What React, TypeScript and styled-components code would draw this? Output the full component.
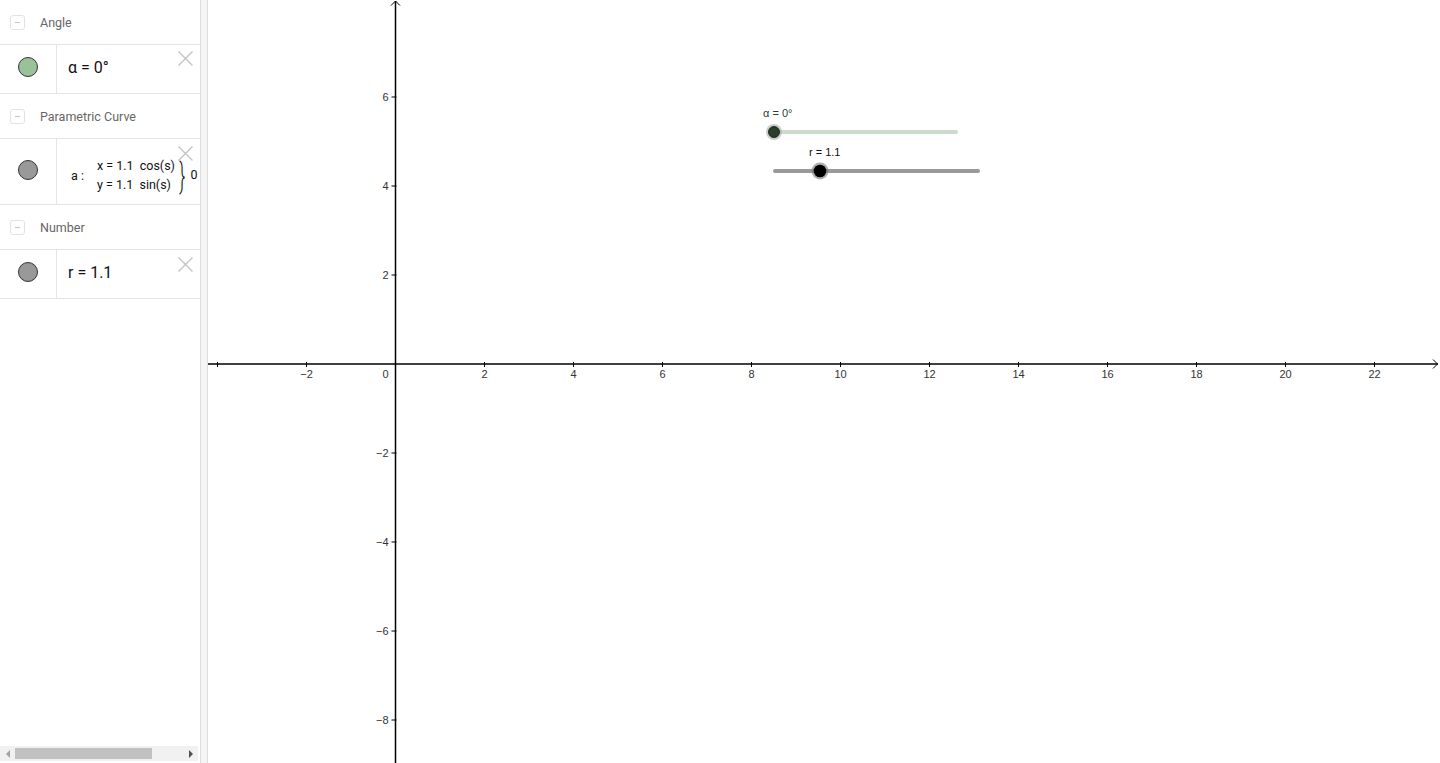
import React from "react";
import styled, { createGlobalStyle } from "styled-components";

const GlobalStyle = createGlobalStyle`
  html, body {
    margin: 0;
    padding: 0;
    height: 100%;
    overflow: hidden;
    background: #fff;
  }
  #root {
    height: 100%;
  }
`;

const Page = styled.div`
  display: flex;
  height: 763px;
  width: 1440px;
  font-family: Roboto, "Noto Sans", sans-serif;
  color: #000;
`;

const AlgebraPanel = styled.aside`
  width: 200px;
  flex: none;
  display: flex;
  flex-direction: column;
  overflow: hidden;
  background: #fff;
`;

const PanelBody = styled.div`
  flex: 1;
  display: flex;
  flex-direction: column;
`;

const GroupHeader = styled.div`
  height: 43px;
  padding-top: 1px;
  flex: none;
  display: flex;
  align-items: center;
  gap: 15px;
  padding-left: 10px;
  border-bottom: 1px solid #e4e4e4;
`;

const CollapseToggle = styled.span`
  width: 13px;
  height: 13px;
  border: 1px solid #e2e2e2;
  border-radius: 3px;
  display: flex;
  align-items: center;
  justify-content: center;

  &::after {
    content: "";
    width: 5px;
    height: 1px;
    background: #c4c4c4;
  }
`;

const GroupTitle = styled.span`
  font-size: 12.5px;
  color: #666;
`;

const ItemRow = styled.div<{ $height: number }>`
  position: relative;
  height: ${({ $height }) => $height - 4}px;
  padding-bottom: 4px;
  flex: none;
  display: flex;
  border-bottom: 1px solid #e4e4e4;
`;

const MarbleCell = styled.div`
  width: 56px;
  margin-bottom: -4px;
  padding-bottom: 4px;
  flex: none;
  display: flex;
  align-items: center;
  justify-content: center;
  border-right: 1px solid #e4e4e4;
`;

const Marble = styled.span<{ $fill: string }>`
  width: 18px;
  height: 18px;
  border-radius: 50%;
  background: ${({ $fill }) => $fill};
  border: 1px solid #333;
`;

const ItemContent = styled.div`
  flex: none;
  display: flex;
  align-items: center;
  padding-left: 11px;
  font-size: 16px;
  white-space: nowrap;
  color: #111;
`;

const CurveLabel = styled.span`
  font-size: 12.5px;
  margin-left: 3px;
  margin-right: 13px;
  margin-top: 11px;
`;

const CurveLines = styled.div`
  display: flex;
  flex-direction: column;
  margin-top: 10px;
  font-size: 12.5px;
  line-height: 19px;
`;

const Brace = styled.span`
  font-size: 20px;
  font-weight: 300;
  margin-left: 4px;
  margin-top: 12px;
  transform: scale(0.9, 1.75);
  color: #111;
`;

const CurveRange = styled.span`
  font-size: 12.5px;
  margin-left: 5px;
  margin-top: 10px;
`;

const DeleteButton = styled.span<{ $top: number }>`
  position: absolute;
  top: ${({ $top }) => $top}px;
  right: 7px;
  width: 15px;
  height: 15px;
  display: block;
`;

const Scrollbar = styled.div`
  height: 15px;
  margin: 0 2px 2px 0;
  background: #f1f1f1;
  display: flex;
  align-items: center;
`;

const ScrollArrow = styled.span<{ $dir: "left" | "right"; $color: string }>`
  width: 15px;
  display: flex;
  justify-content: center;

  &::before {
    content: "";
    border-top: 4px solid transparent;
    border-bottom: 4px solid transparent;
    ${({ $dir, $color }) =>
      $dir === "left"
        ? `border-right: 4px solid ${$color};`
        : `border-left: 4px solid ${$color};`}
  }
`;

const ScrollThumb = styled.span`
  width: 137px;
  height: 11px;
  background: #c1c1c1;
`;

const ScrollTrack = styled.span`
  flex: 1;
`;

const Splitter = styled.div`
  width: 6px;
  flex: none;
  background: #f5f5f5;
  border-left: 1px solid #dcdcdc;
  border-right: 1px solid #dcdcdc;
`;

const GraphicsView = styled.main`
  flex: 1;
  position: relative;
  overflow: hidden;
  background: #fff;

  svg {
    display: block;
  }
`;

const CloseIcon = () => (
  <svg width="15" height="15" viewBox="0 0 15 15">
    <path d="M0.5 0.5 L14.5 14.5 M14.5 0.5 L0.5 14.5" stroke="#c3c3c3" strokeWidth="1.4" fill="none" />
  </svg>
);

const OX = 395.5;
const OY = 364;
const UNIT = 44.5;
const LABEL_FONT = '"Liberation Sans", Arial, sans-serif';

const xTicks = [-4, -2, 2, 4, 6, 8, 10, 12, 14, 16, 18, 20, 22];
const yTicks = [6, 4, 2, -2, -4, -6, -8];

const fmt = (n: number) => (n < 0 ? `\u2212${-n}` : `${n}`);

const Axes = () => (
  <svg width="1232" height="763" viewBox="208 0 1232 763">
    <g stroke="#000" strokeWidth="1.5" fill="none">
      <line x1="208" y1={OY} x2="1438" y2={OY} />
      <line x1={OX} y1="1" x2={OX} y2="763" />
      <polyline points="1433,359.5 1437.5,364 1433,368.5" strokeWidth="1" />
      <polyline points="391,5.5 395.5,1 400,5.5" strokeWidth="1" />
    </g>
    <g stroke="#000" strokeWidth="1">
      {xTicks.map((t) => (
        <line key={t} x1={OX + t * UNIT} y1={OY - 2} x2={OX + t * UNIT} y2={OY + 3} />
      ))}
      {yTicks.map((t) => (
        <line key={t} x1={OX - 4} y1={OY - t * UNIT} x2={OX + 1} y2={OY - t * UNIT} />
      ))}
    </g>
    <g fontFamily={LABEL_FONT} fontSize="11" fill="#333">
      {xTicks
        .filter((t) => t !== -4)
        .map((t) => (
          <text key={t} x={OX + t * UNIT} y={OY + 14} textAnchor="middle">
            {fmt(t)}
          </text>
        ))}
      <text x={OX - 7} y={OY + 14} textAnchor="end">
        0
      </text>
      {yTicks.map((t) => (
        <text key={t} x={OX - 7} y={OY - t * UNIT + 4} textAnchor="end">
          {fmt(t)}
        </text>
      ))}
    </g>

    {/* slider α */}
    <line x1="774" y1="132" x2="956" y2="132" stroke="#cadcca" strokeWidth="4" strokeLinecap="round" />
    <circle cx="774" cy="132" r="8" fill="#9aa89a" opacity="0.55" />
    <circle cx="774" cy="132" r="5.5" fill="#2b3d2b" stroke="#111" strokeWidth="0.8" />
    <text x="763" y="117" fontFamily={LABEL_FONT} fontSize="11" fill="#2c3f2c">
      α = 0°
    </text>

    {/* slider r */}
    <line x1="775" y1="171" x2="978" y2="171" stroke="#999" strokeWidth="4" strokeLinecap="round" />
    <circle cx="820" cy="171" r="8.5" fill="#777" opacity="0.6" />
    <circle cx="820" cy="171" r="6.3" fill="#000" />
    <text x="809" y="156" fontFamily={LABEL_FONT} fontSize="11" fill="#111">
      r = 1.1
    </text>
  </svg>
);

const Group = ({ title }: { title: string }) => (
  <GroupHeader>
    <CollapseToggle />
    <GroupTitle>{title}</GroupTitle>
  </GroupHeader>
);

export default function App() {
  return (
    <>
      <GlobalStyle />
      <Page>
        <AlgebraPanel>
          <PanelBody>
            <Group title="Angle" />
            <ItemRow $height={48}>
              <MarbleCell>
                <Marble $fill="#99c299" />
              </MarbleCell>
              <ItemContent>α = 0°</ItemContent>
              <DeleteButton $top={6}>
                <CloseIcon />
              </DeleteButton>
            </ItemRow>

            <Group title="Parametric Curve" />
            <ItemRow $height={65}>
              <MarbleCell>
                <Marble $fill="#999" />
              </MarbleCell>
              <ItemContent>
                <CurveLabel>a :</CurveLabel>
                <CurveLines>
                  <span>x = 1.1&nbsp; cos(s)</span>
                  <span>y = 1.1&nbsp; sin(s)</span>
                </CurveLines>
                <Brace>{"}"}</Brace>
                <CurveRange>0</CurveRange>
              </ItemContent>
              <DeleteButton $top={7}>
                <CloseIcon />
              </DeleteButton>
            </ItemRow>

            <Group title="Number" />
            <ItemRow $height={48}>
              <MarbleCell>
                <Marble $fill="#999" />
              </MarbleCell>
              <ItemContent>r = 1.1</ItemContent>
              <DeleteButton $top={7}>
                <CloseIcon />
              </DeleteButton>
            </ItemRow>
          </PanelBody>

          <Scrollbar>
            <ScrollArrow $dir="left" $color="#a3a3a3" />
            <ScrollThumb />
            <ScrollTrack />
            <ScrollArrow $dir="right" $color="#505050" />
          </Scrollbar>
        </AlgebraPanel>
        <Splitter />
        <GraphicsView>
          <Axes />
        </GraphicsView>
      </Page>
    </>
  );
}
